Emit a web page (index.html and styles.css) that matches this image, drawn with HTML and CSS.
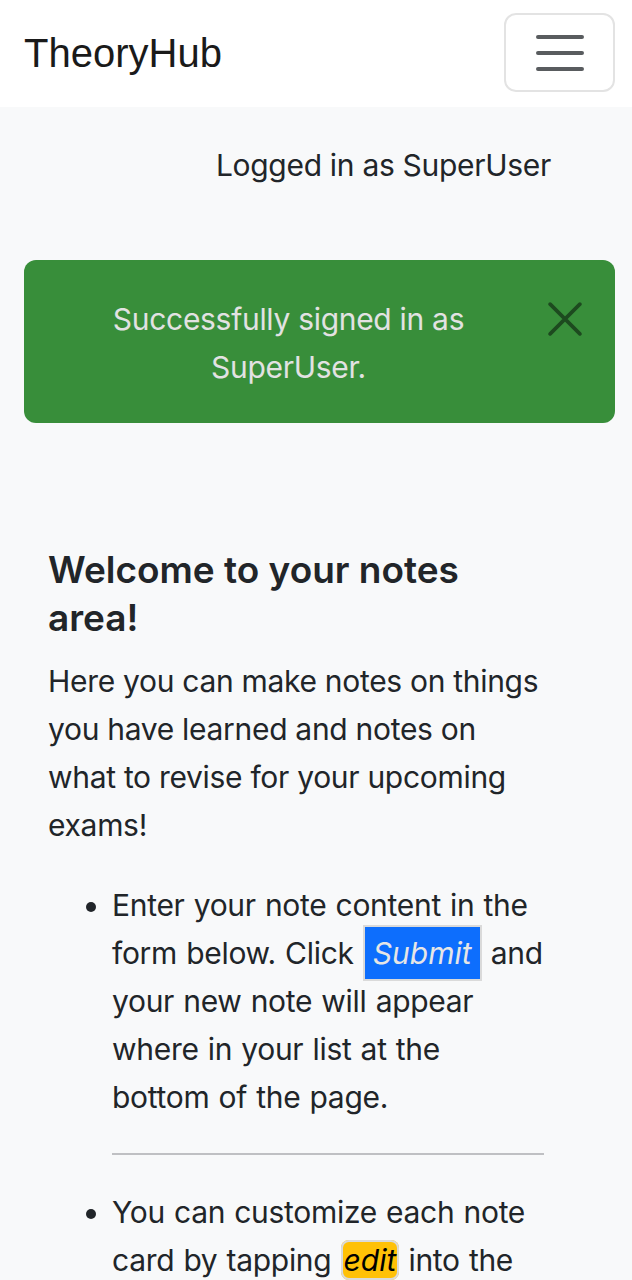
FILE: index.html
```html
<!DOCTYPE html>
<html lang="en">
<head>
<meta charset="utf-8">
<title>TheoryHub</title>
<link rel="stylesheet" href="styles.css">
</head>
<body>
<nav class="navbar">
  <a class="brand" href="#">TheoryHub</a>
  <button class="toggler" aria-label="Toggle navigation">
    <svg width="60" height="60" viewBox="0 0 30 30"><path stroke="rgba(33,37,41,0.75)" stroke-linecap="round" stroke-width="2" d="M4 7h22M4 15h22M4 23h22"/></svg>
  </button>
</nav>
<main class="page">
  <p class="logged">Logged in as SuperUser</p>
  <div class="alert">
    <span class="alert-text">Successfully signed in as SuperUser.</span>
    <button class="close" aria-label="Close">
      <svg width="34" height="34" viewBox="0 0 16 16"><path d="M1 1l14 14M15 1L1 15" stroke="#1d4a1f" stroke-width="1.7" stroke-linecap="round"/></svg>
    </button>
  </div>
  <section class="intro">
    <h2 class="title">Welcome to your notes area!</h2>
    <p class="lead">Here you can make notes on things you have learned and notes on what to revise for your upcoming exams!</p>
    <ul class="steps">
      <li>Enter your note content in the form below. Click <span class="tag tag-submit">Submit</span> and your new note will appear where in your list at the bottom of the page.</li>
      <li class="divider" aria-hidden="true"></li>
      <li>You can customize each note card by tapping <span class="tag tag-edit">edit</span> into the note to change it.</li>
    </ul>
  </section>
</main>
</body>
</html>
```
FILE: styles.css
```css
* { box-sizing: border-box; }
html, body { margin: 0; padding: 0; }
body {
  background: #f8f9fa;
  color: #212529;
  font-family: Inter, "Noto Sans", "Liberation Sans", sans-serif;
  font-size: 30px;
  line-height: 48px;
  letter-spacing: -0.3px;
}
.navbar {
  height: 107px;
  background: #ffffff;
  display: flex;
  align-items: flex-start;
  justify-content: space-between;
  padding: 0 17px 0 24px;
}
.brand {
  font-family: "Liberation Sans", Arial, sans-serif;
  font-size: 40px;
  line-height: 60px;
  letter-spacing: 0;
  color: #1a1a1a;
  text-decoration: none;
  margin-top: 23px;
}
.toggler {
  margin-top: 13px;
  width: 111px;
  height: 79px;
  padding: 0;
  background: transparent;
  border: 2px solid #e3e3e3;
  border-radius: 12px;
  display: flex;
  align-items: center;
  justify-content: center;
}
.page {
  padding: 0 17px 0 24px;
}
.logged {
  margin: 0;
  padding: 34px 64px 0 0;
  text-align: right;
  line-height: 48px;
}
.alert {
  position: relative;
  margin-top: 71px;
  background: #388e3a;
  border-radius: 12px;
  padding: 35px 96px 32px 34px;
  text-align: center;
  color: #e2e2e2;
  line-height: 48px;
}
.close {
  position: absolute;
  top: 0;
  right: 0;
  padding: 42px 33px;
  background: none;
  border: 0;
  line-height: 0;
}
.intro {
  padding: 123px 71px 0 24px;
}
.title {
  margin: 0 0 15px;
  font-size: 37px;
  font-weight: 600;
  line-height: 48px;
  letter-spacing: 0;
}
.lead {
  margin: 0 0 32px;
}
.steps {
  margin: 0;
  padding: 0 0 0 64px;
}
.steps li {
  margin: 0;
  word-spacing: 1px;
}
.steps .divider {
  list-style: none;
  height: 2px;
  background: #bfc0c3;
  margin: 32px 0 33px;
}
.tag {
  font-style: italic;
  letter-spacing: 0;
  border: 2px solid #dadada;
}
.tag-submit {
  background: #0d6efd;
  color: #e6e6e6;
  padding: 8px 8px 8px 8px;
}
.tag-edit {
  background: #ffc107;
  color: #000000;
  border-radius: 8px;
  padding: 0 1px;
}
```
